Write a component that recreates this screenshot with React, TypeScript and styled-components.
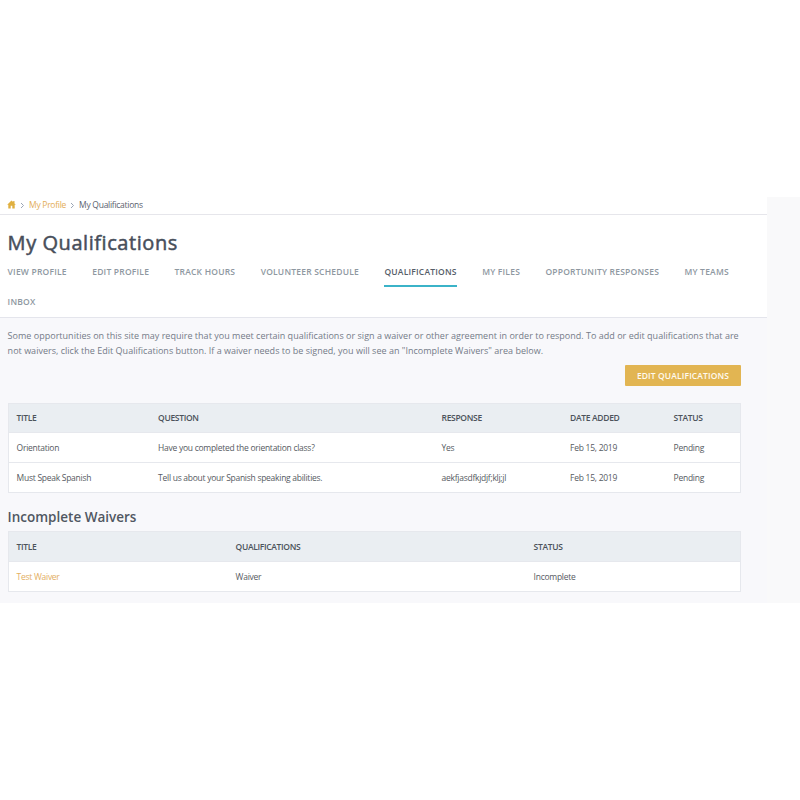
import React from "react";
import styled, { createGlobalStyle } from "styled-components";

const GlobalStyle = createGlobalStyle`
  * { box-sizing: border-box; }
  body { margin: 0; background: #fff; font-family: "Open Sans", "Noto Sans", sans-serif; }
  h1, h2, p { margin: 0; }
`;

const Page = styled.div`
  width: 800px;
  height: 800px;
  padding-top: 197px;
  overflow: hidden;
`;

const Shell = styled.div`
  display: flex;
  height: 405.5px;
  background: #f9f9fa;
`;

const Main = styled.main`
  width: 767px;
  background: #f8f8fb;
`;

const Breadcrumb = styled.div`
  display: flex;
  align-items: center;
  height: 18px;
  padding: 0 0 2px 7px;
  background: #fff;
  border-bottom: 1px solid #e6e6eb;
  font-size: 8.5px;
  letter-spacing: -0.27px;
  color: #5b626e;
`;

const HomeIcon = styled.svg`
  width: 9px;
  height: 9px;
  margin-right: 4px;
`;

const Chevron = styled.svg`
  width: 5px;
  height: 7px;
  margin: 1px 4px 0 0;
`;

const CrumbLink = styled.span`
  margin-right: 4px;
  color: #e3ad57;
`;

const Header = styled.header`
  height: 103px;
  padding: 13px 8px 0 7.6px;
  background: #fff;
  border-bottom: 1px solid #e4e5ec;
`;

const Title = styled.h1`
  height: 30px;
  line-height: 29px;
  font-size: 20px;
  font-weight: 400;
  letter-spacing: 0.56px;
  -webkit-text-stroke: 0.5px #474e5a;
  color: #474e5a;
`;

const Nav = styled.nav`
  display: flex;
  flex-wrap: wrap;
  column-gap: 25.4px;
  margin-top: 6px;
`;

const NavItem = styled.span<{ $active?: boolean }>`
  height: 23px;
  margin-bottom: 7px;
  line-height: 15px;
  font-size: 8.5px;
  font-weight: 600;
  letter-spacing: 0.21px;
  white-space: nowrap;
  color: ${(p) => (p.$active ? "#555d68" : "#8e98a1")};
  border-bottom: 2px solid ${(p) => (p.$active ? "#3bb3c8" : "transparent")};
`;

const Content = styled.section`
  padding: 10px 26px 0 7.6px;
`;

const Intro = styled.p`
  line-height: 15px;
  font-size: 9px;
  letter-spacing: 0.015px;
  white-space: nowrap;
  color: #747b88;
`;

const Actions = styled.div`
  display: flex;
  justify-content: flex-end;
  margin: 7px 0 17px;
`;

const EditButton = styled.button`
  width: 116px;
  height: 21px;
  padding: 0;
  border: 0;
  border-radius: 1px;
  background: #e2b552;
  color: #fffaf0;
  font: 600 8.5px/20px "Open Sans", sans-serif;
  letter-spacing: 0.12px;
`;

const Table = styled.div`
  border: 1px solid #e6e8ed;
`;

const Row = styled.div<{ $columns: string; $head?: boolean }>`
  display: grid;
  grid-template-columns: ${(p) => p.$columns};
  align-items: center;
  height: 30px;
  padding: 0 0 0 8px;
  background: ${(p) => (p.$head ? "#eaeef2" : "#fff")};
  color: ${(p) => (p.$head ? "#4c535b" : "#565a62")};
  font-size: 8.5px;
  letter-spacing: ${(p) => (p.$head ? "-0.33px" : "-0.27px")};
  font-weight: ${(p) => (p.$head ? 600 : 400)};
  white-space: nowrap;

  & + & {
    border-top: 1px solid #e6e8ed;
  }
`;

const HeadRow = styled(Row)<{ $tall?: boolean }>`
  height: ${(p) => (p.$tall ? "29px" : "28px")};
  padding-bottom: 1px;
`;

const WaiverLink = styled.span`
  color: #e3ae62;
`;

const SectionTitle = styled.h2`
  height: 38px;
  padding-top: 14px;
  line-height: 20px;
  font-size: 13.5px;
  font-weight: 600;
  color: #505762;
`;

const tabs = [
  "VIEW PROFILE",
  "EDIT PROFILE",
  "TRACK HOURS",
  "VOLUNTEER SCHEDULE",
  "QUALIFICATIONS",
  "MY FILES",
  "OPPORTUNITY RESPONSES",
  "MY TEAMS",
  "INBOX",
];

const qualificationColumns = "141.5px 283.5px 128.5px 103.5px 1fr";
const waiverColumns = "219px 298px 1fr";

const qualifications = [
  ["Orientation", "Have you completed the orientation class?", "Yes", "Feb 15, 2019", "Pending"],
  ["Must Speak Spanish", "Tell us about your Spanish speaking abilities.", "aekfjasdfkjdjf;klj;jl", "Feb 15, 2019", "Pending"],
];

const Separator = () => (
  <Chevron viewBox="0 0 5 7">
    <path d="M1 1 L3.5 3.5 L1 6" fill="none" stroke="#9aa5b5" strokeWidth="1" />
  </Chevron>
);

export default function App() {
  return (
    <>
      <GlobalStyle />
      <Page>
        <Shell>
          <Main>
            <Breadcrumb>
              <HomeIcon viewBox="0 0 9 9">
                <path d="M4.5 .5 L6.2 2.1 V1 H7.5 V3.4 L8.8 4.7 H7.7 V8.5 H5.3 V5.8 H3.7 V8.5 H1.3 V4.7 H.2 Z" fill="#e0b040" />
              </HomeIcon>
              <Separator />
              <CrumbLink>My Profile</CrumbLink>
              <Separator />
              <span>My Qualifications</span>
            </Breadcrumb>
            <Header>
              <Title>My Qualifications</Title>
              <Nav>
                {tabs.map((tab) => (
                  <NavItem key={tab} $active={tab === "QUALIFICATIONS"}>
                    {tab}
                  </NavItem>
                ))}
              </Nav>
            </Header>
            <Content>
              <Intro>
                Some opportunities on this site may require that you meet certain qualifications or sign a waiver or other agreement in order to respond. To add or edit qualifications that are
                <br />
                not waivers, click the Edit Qualifications button. If a waiver needs to be signed, you will see an "Incomplete Waivers" area below.
              </Intro>
              <Actions>
                <EditButton>EDIT QUALIFICATIONS</EditButton>
              </Actions>
              <Table>
                <HeadRow $head $columns={qualificationColumns}>
                  <span>TITLE</span>
                  <span>QUESTION</span>
                  <span>RESPONSE</span>
                  <span>DATE ADDED</span>
                  <span>STATUS</span>
                </HeadRow>
                {qualifications.map((cells) => (
                  <Row key={cells[0]} $columns={qualificationColumns}>
                    {cells.map((cell) => (
                      <span key={cell}>{cell}</span>
                    ))}
                  </Row>
                ))}
              </Table>
              <SectionTitle>Incomplete Waivers</SectionTitle>
              <Table>
                <HeadRow $head $tall $columns={waiverColumns}>
                  <span>TITLE</span>
                  <span>QUALIFICATIONS</span>
                  <span>STATUS</span>
                </HeadRow>
                <Row $columns={waiverColumns}>
                  <WaiverLink>Test Waiver</WaiverLink>
                  <span>Waiver</span>
                  <span>Incomplete</span>
                </Row>
              </Table>
            </Content>
          </Main>
        </Shell>
      </Page>
    </>
  );
}
